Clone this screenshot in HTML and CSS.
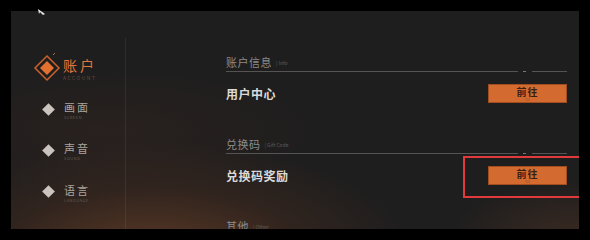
FILE: index.html
```html
<!DOCTYPE html>
<html lang="zh-CN">
<head>
<meta charset="UTF-8">
<title>设置</title>
<link rel="stylesheet" href="styles.css">
</head>
<body>
<div class="frame">
  <svg class="back-mark" width="10" height="8" viewBox="0 0 10 8"><polygon points="1,1 8,6 6,7 3,4 2,6" fill="#e8e8e8"/></svg>
  <div class="panel">
    <div class="sidebar">
      <div class="menu-item active">
        <div class="menu-icon">
          <svg width="30" height="30" viewBox="0 0 30 30">
            <polygon points="15,3 27,15 15,27 3,15" fill="none" stroke="#c8622c" stroke-width="1.5"/>
            <polygon points="15,8 22,15 15,22 8,15" fill="#e2702f"/>
            <line x1="21" y1="2" x2="23" y2="0" stroke="#c8622c" stroke-width="1"/>
          </svg>
        </div>
        <div class="menu-text">
          <span class="menu-title">账户</span>
          <span class="menu-sub">ACCOUNT</span>
        </div>
      </div>
      <div class="menu-item">
        <div class="menu-icon"><span class="diamond"></span></div>
        <div class="menu-text">
          <span class="menu-title">画面</span>
          <span class="menu-sub">SCREEN</span>
        </div>
      </div>
      <div class="menu-item">
        <div class="menu-icon"><span class="diamond"></span></div>
        <div class="menu-text">
          <span class="menu-title">声音</span>
          <span class="menu-sub">SOUND</span>
        </div>
      </div>
      <div class="menu-item">
        <div class="menu-icon"><span class="diamond"></span></div>
        <div class="menu-text">
          <span class="menu-title">语言</span>
          <span class="menu-sub">LANGUAGE</span>
        </div>
      </div>
    </div>
    <div class="content">
      <div class="section">
        <div class="section-head"><span class="head-cn">账户信息</span><span class="head-en">| Info</span></div>
        <div class="row">
          <span class="row-label">用户中心</span>
          <button class="go-btn"><span class="btn-text">前往</span><span class="btn-sub">GO</span></button>
        </div>
      </div>
      <div class="section">
        <div class="section-head"><span class="head-cn">兑换码</span><span class="head-en">| Gift Code</span></div>
        <div class="row">
          <span class="row-label">兑换码奖励</span>
          <div class="btn-wrap">
            <button class="go-btn"><span class="btn-text">前往</span><span class="btn-sub">GO</span></button>
            <div class="highlight"></div>
          </div>
        </div>
      </div>
      <div class="section">
        <div class="section-head"><span class="head-cn">其他</span><span class="head-en">| Other</span></div>
      </div>
    </div>
  </div>
</div>
</body>
</html>
```

FILE: styles.css
```css
body { margin: 0; background: #000; width: 590px; height: 240px; overflow: hidden; font-family: "Noto Sans CJK SC", "Noto Sans", sans-serif; }
.frame { position: relative; padding: 11px 11px 11px 11px; height: 218px; }
.back-mark { position: absolute; left: 37px; top: 8px; z-index: 2; }
.panel { display: flex; height: 218px; overflow: hidden; background-color: #1f1e1e;
  background-image: radial-gradient(ellipse 260px 120px at 140px 250px, rgba(130, 74, 42, 0.65), rgba(95, 52, 30, 0.28) 60%, transparent 100%),
    radial-gradient(ellipse 120px 60px at 560px 230px, rgba(110, 65, 40, 0.35), transparent 100%),
    radial-gradient(ellipse 200px 60px at 100px 120px, rgba(80, 45, 30, 0.2), transparent 100%); }

.sidebar { width: 115px; margin-top: 27px; padding-top: 9px; border-right: 1px solid rgba(255, 255, 255, 0.07); box-sizing: border-box; }
.menu-item { display: flex; align-items: center; height: 41.4px; padding-left: 23px; }
.menu-icon { width: 28px; height: 28px; display: flex; align-items: center; justify-content: center; }
.diamond { width: 9px; height: 9px; background: #cbc4be; transform: rotate(45deg); }
.menu-text { display: flex; flex-direction: column; margin-left: 2px; padding-top: 2px; }
.menu-title { font-size: 11px; line-height: 15px; color: #aca59f; letter-spacing: 2px; }
.menu-sub { font-size: 4px; line-height: 5px; color: #635c56; letter-spacing: 0.5px; }
.active .menu-icon { width: 30px; height: 30px; margin-left: -2px; }
.active .menu-text { margin-left: 1px; padding-top: 0; }
.active .menu-title { font-size: 14px; line-height: 20px; color: #e2763a; letter-spacing: 3px; }
.active .menu-sub { font-size: 5px; line-height: 6px; color: #5f4a3e; letter-spacing: 1.5px; }

.content { flex: 1; padding: 44px 12px 0 100px; }
.section { margin-bottom: 34px; }
.section-head { height: 14px; padding-bottom: 2px; display: flex; align-items: center;
  background: linear-gradient(to right, #555453 calc(100% - 49px), transparent calc(100% - 49px), transparent calc(100% - 44px), #777 calc(100% - 44px), #777 calc(100% - 41px), transparent calc(100% - 41px), transparent calc(100% - 35px), #555453 calc(100% - 35px)) left bottom / 100% 1px no-repeat;
  padding-bottom: 3px; }
.head-cn { font-size: 11px; color: #8c8a88; letter-spacing: 0.5px; }
.head-en { font-size: 5px; color: #5e5c5a; margin-left: 4px; }
.row { display: flex; justify-content: space-between; align-items: center; margin-top: 12px; }
.row-label { font-size: 12px; font-weight: bold; color: #dcdad8; letter-spacing: 0.5px; }
.btn-wrap { position: relative; }
.go-btn { width: 79px; height: 19px; padding: 0; background: #d36a30; border: 1px solid #a24d20; display: flex; flex-direction: column; align-items: center; justify-content: center; font-family: inherit; }
.btn-text { font-size: 10px; font-weight: bold; line-height: 14px; color: #3a2014; letter-spacing: 1px; }
.btn-sub { font-size: 3px; line-height: 3px; color: #8c4a24; }
.highlight { position: absolute; left: -25px; top: -10px; right: -25px; bottom: -13px; border: 2px solid #e03a3c; }
```
